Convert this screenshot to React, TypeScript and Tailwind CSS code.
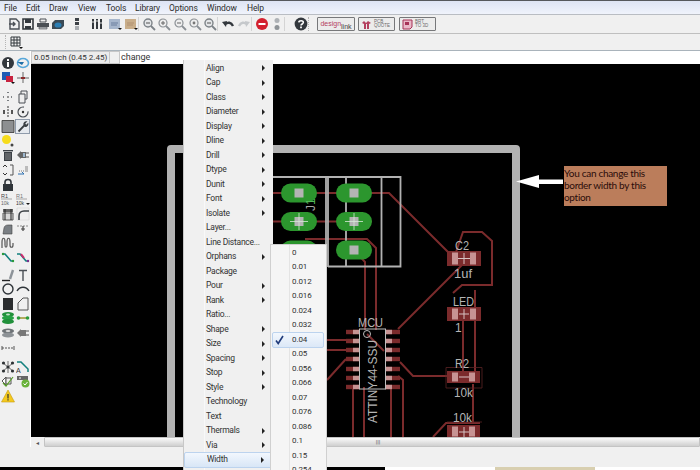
import React from "react";

const FONT = "font-['Roboto','Liberation_Sans',sans-serif]";

const menuBar = [
  { label: "File", w: "w-[22px]" },
  { label: "Edit", w: "w-[23px]" },
  { label: "Draw", w: "w-[29px]" },
  { label: "View", w: "w-[28px]" },
  { label: "Tools", w: "w-[29px]" },
  { label: "Library", w: "w-[34px]" },
  { label: "Options", w: "w-[38px]" },
  { label: "Window", w: "w-[40px]" },
  { label: "Help", w: "w-[30px]" },
];

const changeItems: [string, boolean][] = [
  ["Align", true], ["Cap", true], ["Class", true], ["Diameter", true], ["Display", true], ["Dline", true], ["Drill", true],
  ["Dtype", true], ["Dunit", true], ["Font", true], ["Isolate", true], ["Layer...", false], ["Line Distance...", false],
  ["Orphans", true], ["Package", false], ["Pour", true], ["Rank", true], ["Ratio...", false], ["Shape", true], ["Size", true],
  ["Spacing", true], ["Stop", true], ["Style", true], ["Technology", false], ["Text", false], ["Thermals", true], ["Via", true], ["Width", true],
];

const widths = ["0", "0.01", "0.012", "0.016", "0.024", "0.032", "0.04", "0.05", "0.056", "0.066", "0.07", "0.076", "0.086", "0.1", "0.15", "0.254"];

function Svg({ children, size = 14 }: { children: React.ReactNode; size?: number }) {
  return (
    <svg width={size} height={size} viewBox="0 0 14 14" className="block">
      {children}
    </svg>
  );
}

const G = "#4a4f55";

const icons: Record<string, React.ReactNode> = {
  newfile: <Svg><path d="M3 2h6l3 3v7H3z" fill="none" stroke={G} strokeWidth="1.4" /><path d="M2 7h6M6 5l2 2-2 2" fill="none" stroke={G} strokeWidth="1.4" /></Svg>,
  save: <Svg><path d="M2 2h10v10H2z" fill="none" stroke="#33383d" strokeWidth="1.6" /><path d="M4 2h6v4H4zM4 9h6v3H4z" fill="#33383d" /></Svg>,
  print: <Svg><path d="M4 2h6v3H4z" fill="none" stroke={G} /><path d="M1 6h12v4H1z" fill={G} /><path d="M3 10h8v2H3z" fill="#b5b8bb" stroke={G} strokeWidth=".6" /></Svg>,
  cam: <Svg><path d="M1 6l3-3h9v6l-3 3H1z" fill="#3b4a55" /><ellipse cx="7" cy="8" rx="3.5" ry="2.6" fill="#2c7fb5" /></Svg>,
  run: <Svg><path d="M5 1h4v3H5zM5 5h4v3H5z" fill="#3c4146" /><path d="M5 9h4v4H5z" fill="#a9adb1" /></Svg>,
  bars: <Svg><path d="M2 2h2v10H2zM6 2h2v10H6zM10 2h2v10h-2z" fill="#33383d" /><path d="M2 5h2M6 4h2M10 6h2" stroke="#ddd" /></Svg>,
  sch: <Svg><path d="M1 2h11v10H1z" fill="#a6b6cc" /><path d="M3 6h7M3 8h6" stroke="#6a7f9e" /><path d="M10 11h4l-2 2z" fill="#111" /></Svg>,
  brd: <Svg><path d="M1 2h11v10H1z" fill="#c9ae8a" /><path d="M3 6h7M3 8h6" stroke="#b09070" /><path d="M10 11h4l-2 2z" fill="#111" /></Svg>,
  zfit: <Svg><circle cx="6" cy="6" r="4" fill="#e4e6e8" stroke="#7c8287" strokeWidth="1.4" /><path d="M4 6h4" stroke="#555" /><path d="M9 9l4 4" stroke="#7c8287" strokeWidth="1.8" /></Svg>,
  zin: <Svg><circle cx="6" cy="6" r="4" fill="#eee" stroke="#8b9095" strokeWidth="1.2" /><path d="M4 6h4M6 4v4" stroke="#666" /><path d="M9 9l4 4" stroke="#8b9095" strokeWidth="1.8" /></Svg>,
  zout: <Svg><circle cx="6" cy="6" r="4" fill="#eee" stroke="#8b9095" strokeWidth="1.2" /><path d="M4 6h4" stroke="#666" /><path d="M9 9l4 4" stroke="#8b9095" strokeWidth="1.8" /></Svg>,
  zsel: <Svg><circle cx="6" cy="6" r="4" fill="#eee" stroke="#8b9095" strokeWidth="1.2" /><circle cx="6" cy="6" r="1.4" fill="#777" /><path d="M9 9l4 4" stroke="#8b9095" strokeWidth="1.8" /></Svg>,
  undo: <Svg><path d="M12 9C10 5 7 5 4 7" fill="none" stroke="#33383d" strokeWidth="2.4" /><path d="M1 5l5-1-1 6z" fill="#33383d" /></Svg>,
  redo: <Svg><path d="M2 9c2-4 5-4 8-2" fill="none" stroke="#c5c8cb" strokeWidth="2.4" /><path d="M13 5L8 4l1 6z" fill="#c5c8cb" /></Svg>,
  stop: <Svg><circle cx="7" cy="7" r="6" fill="#d3202f" /><path d="M3.5 6h7v2h-7z" fill="#fff" /></Svg>,
  go: <Svg><circle cx="7" cy="3.5" r="2.5" fill="#aeb2b6" /><circle cx="7" cy="10.5" r="2.5" fill="#8f9498" /></Svg>,
  help: <Svg><circle cx="7" cy="7" r="6.4" fill="#33383d" /><path d="M4.8 5.4C5 3.2 9.4 3.2 9.3 5.5 9.2 7 7 7 7 8.6" fill="none" stroke="#fff" strokeWidth="1.6" /><path d="M6.1 9.6h1.8v1.7H6.1z" fill="#fff" /></Svg>,
  grid: <Svg><path d="M2 2h9v9H2zM5 2v9M8 2v9M2 5h9M2 8h9" fill="none" stroke="#33383d" strokeWidth="1" /><path d="M10 12h4l-2 2z" fill="#111" /></Svg>,
  info: <Svg><circle cx="7" cy="7" r="6" fill="#33383d" /><path d="M6 3h2v2H6zM6 6h2v5H6z" fill="#fff" /></Svg>,
  back: <Svg><ellipse cx="7" cy="7" rx="5.5" ry="4.5" fill="none" stroke="#57a7d9" strokeWidth="1.6" /><path d="M1 6h7l-2 3z" fill="#1f6fa8" /></Svg>,
  layers: <Svg><path d="M1 1h8v8H1z" fill="#1d5bb5" /><path d="M5 5h7v6H5z" fill="#c8233f" /><path d="M10 11h4l-2 2z" fill="#111" /></Svg>,
  split: <Svg><path d="M7 1v11M1 7h5M8 7h5" stroke="#666" /><path d="M5 6h4v2H5z" fill="#8d2b2b" /></Svg>,
  move: <Svg><path d="M7 2v2M7 10v2M2 7h2M10 7h2" stroke="#5c6166" strokeWidth="1.6" strokeDasharray="1 1" /><circle cx="7" cy="7" r="1" fill="#777" /></Svg>,
  copy: <Svg><path d="M5 1h6v8H5z" fill="#eee" stroke={G} /><path d="M3 4h6v9H3z" fill="#eee" stroke={G} /></Svg>,
  mirror: <Svg><path d="M7 1v12" stroke="#333" strokeDasharray="2 1" /><path d="M2 5h2v4H2zM10 5h2v4h-2z" fill="#555" /></Svg>,
  rotate: <Svg><circle cx="7" cy="7" r="5" fill="none" stroke={G} strokeWidth="1.2" strokeDasharray="24 6" /><circle cx="7" cy="7" r="1.2" fill="#333" /></Svg>,
  square: <Svg size={15}><path d="M1 1h12v12H1z" fill="#8d8f91" stroke="#333" strokeWidth=".8" /></Svg>,
  wrench: <Svg><path d="M2 12l6-6c-.8-2.6 1.6-5 4.4-4L10 4.4l1 1.2 2.2-2.2c.8 3-1.6 5.2-4.2 4.4l-5.6 5.8z" fill="#3a3f44" /></Svg>,
  sun: <Svg><circle cx="5.5" cy="5.5" r="4.5" fill="#f6dc1c" /><circle cx="11" cy="11" r="1.5" fill="#444" /></Svg>,
  trash: <Svg><path d="M3 4h8v9H3z" fill="#3c4146" /><path d="M2 2h10v1.4H2z" fill="#3c4146" /><path d="M5 5v7M7 5v7M9 5v7" stroke="#aaa" strokeWidth=".7" /></Svg>,
  addpart: <Svg><path d="M1 7l4-4v8zM5 4h5v6H5z" fill="#666" /><path d="M10 5h3M10 9h3" stroke="#555" /><path d="M7 5h2v4H7z" fill="#9db7cf" /></Svg>,
  value: <Svg><path d="M2 4l2-2 2 2M2 10l2 2 2-2" fill="none" stroke="#333" /><path d="M9 2h3v10H9" fill="none" stroke="#555" /></Svg>,
  pinswap: <Svg><path d="M3 8h5" stroke="#777" strokeDasharray="1 1" /><path d="M9 3h3v6H9z" fill="#bbb" /><path d="M2 11h6l-2-2" fill="none" stroke="#2b6fb0" /></Svg>,
  lock: <Svg><path d="M4 6V4c0-3.4 6-3.4 6 0v2" fill="none" stroke="#2f3439" strokeWidth="1.6" /><path d="M2 6h10v7H2z" fill="#2f3439" /></Svg>,
  name: <Svg><text x="0" y="5.5" fontSize="5.5" fill="#444" fontFamily="Liberation Sans">R1</text><path d="M0 7h11" stroke="#777" strokeWidth=".6" /><text x="0" y="12.5" fontSize="5" fill="#666" fontFamily="Liberation Sans">10k</text></Svg>,
  val: <Svg><text x="0" y="5.5" fontSize="5.5" fill="#777" fontFamily="Liberation Sans">R1</text><path d="M0 7h11" stroke="#777" strokeWidth=".6" /><text x="0" y="12.5" fontSize="5" fill="#333" fontFamily="Liberation Sans">10k</text><path d="M10 11h4l-2 2z" fill="#111" /></Svg>,
  smash: <Svg><path d="M2 2h10v3H2z" fill="#666" /><path d="M2 6h10v7H2z" fill="#d8d8d8" stroke="#555" /><path d="M4 2v11M10 2v11" stroke="#222" /></Svg>,
  miter: <Svg><path d="M1 1h12v12H1z" fill="#efefef" stroke="#ccc" strokeWidth=".5" /><path d="M3 13V9c0-3 2-5 5-5h5" fill="none" stroke="#3c4146" strokeWidth="1.6" /></Svg>,
  splitline: <Svg><path d="M2 13l1-6c.3-2 2-3 4-3h4v9z" fill="#7a7f84" stroke="#444" strokeWidth=".6" /></Svg>,
  plus: <Svg><path d="M1 5h12" stroke="#888" strokeDasharray="2 1" /><path d="M7 5v5M5 8h4" stroke="#444" strokeWidth="1.2" /></Svg>,
  wave: <Svg><path d="M1 12V6c0-5 3-5 3 0v3c0 3 2 3 2 0V6c0-5 3-5 3 0v3c0 3 3 3 3 0V7" fill="none" stroke="#555" strokeWidth="1.2" /></Svg>,
  route: <Svg><path d="M1 3h3l6 7h3" fill="none" stroke="#13807e" strokeWidth="1.6" /><circle cx="2" cy="3" r="1.2" fill="#2c9b3a" /><circle cx="12" cy="10" r="1.2" fill="#2c9b3a" /></Svg>,
  ripup: <Svg><path d="M1 3h3l6 7h3" fill="none" stroke="#13807e" strokeWidth="1.6" /><path d="M5 3l3 4" stroke="#cf2b6e" strokeWidth="2" /><circle cx="12" cy="10" r="1.2" fill="#7a2e8f" /></Svg>,
  wire: <Svg><path d="M9 11l3-9" stroke="#8d9399" strokeWidth="2.4" /><path d="M1 12.5h8" stroke="#222" strokeWidth="1.4" /></Svg>,
  text: <Svg><path d="M3 2.5h8M7 2.5V13" stroke="#4a4f55" strokeWidth="1.4" fill="none" /></Svg>,
  circle: <Svg><circle cx="7" cy="7" r="5" fill="none" stroke="#2f3439" strokeWidth="1.4" /></Svg>,
  arc: <Svg><path d="M1 9c3-5 9-5 12 0" fill="none" stroke="#2f3439" strokeWidth="1.4" /></Svg>,
  rect: <Svg><path d="M2 1h10v12H2z" fill="#2a2c2e" /></Svg>,
  poly: <Svg><path d="M2 13V6l5-5h5v12z" fill="none" stroke="#555" /></Svg>,
  via: <Svg><ellipse cx="7" cy="3.5" rx="6" ry="2.4" fill="#21903b" /><ellipse cx="7" cy="7" rx="6" ry="2.4" fill="#25a043" /><ellipse cx="7" cy="10.5" rx="6" ry="2.4" fill="#21903b" /><ellipse cx="7" cy="3.5" rx="2" ry="1" fill="#bfe3c5" /></Svg>,
  signal: <Svg><path d="M1 7h12" stroke="#9a8f20" strokeWidth="1.4" /><circle cx="2.5" cy="7" r="1.8" fill="#2a9b3d" /><circle cx="11.5" cy="7" r="1.8" fill="#2a9b3d" /></Svg>,
  hole: <Svg><ellipse cx="7" cy="5" rx="6" ry="2.6" fill="#6d7276" /><ellipse cx="7" cy="9" rx="6" ry="2.6" fill="#8d9296" /><ellipse cx="7" cy="5" rx="2.4" ry="1" fill="#ddd" /></Svg>,
  attr: <Svg><path d="M1 7l4-4v8zM5 4h5v6H5z" fill="#777" /><path d="M10 5h3M10 9h3" stroke="#555" /></Svg>,
  dim: <Svg><path d="M1 5v4M13 5v4" stroke="#555" /><path d="M1 7h12" stroke="#555" strokeDasharray="2 1" /></Svg>,
  ratsnest: <Svg><path d="M2 3l10 8M2 11l10-8M7 1v12" stroke="#333" strokeWidth=".7" /><circle cx="2.5" cy="3" r="1.6" fill="#2d3134" /><circle cx="11.5" cy="3" r="1.6" fill="#2d3134" /><circle cx="2.5" cy="11" r="1.6" fill="#2d3134" /><circle cx="11.5" cy="11" r="1.6" fill="#2d3134" /><circle cx="7" cy="7" r="1.6" fill="#2d3134" /></Svg>,
  auto: <Svg><path d="M1 2h4l7 7v3" fill="none" stroke="#13807e" strokeWidth="1.5" /><text x="0" y="13" fontSize="7" fill="#333" fontFamily="Liberation Sans">A</text></Svg>,
  erc: <Svg><path d="M1 7l4-4v8z" fill="#fff" stroke="#555" /><path d="M5 4h5v6H5z" fill="#eee" stroke="#555" /><path d="M2 9l3 3 7-9" fill="none" stroke="#5aa02c" strokeWidth="1.2" /></Svg>,
  drc: <Svg><path d="M1 2h11v4H1z" fill="#666" /><path d="M3 3.5h2v1H3z" fill="#fff" /><circle cx="9.5" cy="9.5" r="4" fill="#69b23a" /><path d="M7.5 9.5l1.5 1.5 2.5-3" fill="none" stroke="#fff" /></Svg>,
  warn: <Svg><path d="M7 1l6.5 12h-13z" fill="#f4c91d" stroke="#c79a10" strokeWidth=".6" /><path d="M6.4 5h1.2v4.4H6.4zM6.4 10.2h1.2v1.2H6.4z" fill="#333" /></Svg>,
};

const sideRows: { a?: string; b?: string; gap?: string; active?: boolean }[] = [
  { a: "info", b: "back" },
  { a: "layers", b: "split" },
  { a: "move", b: "copy", gap: "mt-[4.5px]" },
  { a: "mirror", b: "rotate" },
  { a: "square", b: "wrench", active: true },
  { a: "sun" },
  { a: "trash", b: "addpart" },
  { a: "value", b: "pinswap" },
  { a: "lock" },
  { a: "name", b: "val" },
  { a: "smash", b: "miter" },
  { a: "splitline", b: "plus" },
  { a: "wave" },
  { a: "route", b: "ripup" },
  { a: "wire", b: "text", gap: "mt-[2.5px]" },
  { a: "circle", b: "arc" },
  { a: "rect", b: "poly" },
  { a: "via", b: "signal" },
  { a: "hole", b: "attr" },
  { a: "dim" },
  { a: "ratsnest", b: "auto", gap: "mt-[4.5px]" },
  { a: "erc", b: "drc" },
  { a: "warn" },
];

function Tool({ name, className = "" }: { name: string; className?: string }) {
  return <div className={`w-[15px] h-[15px] flex items-center justify-center shrink-0 ${className}`}>{icons[name]}</div>;
}

function Grip() {
  return <div className="w-px h-[14px] border-l border-dotted border-[#b5b5b5] shrink-0" />;
}

function Sep() {
  return <div className="w-px h-[14px] bg-[#d4d4d4] shrink-0" />;
}

function PinkButton({ caption, icon, className = "" }: { caption: string[]; icon?: React.ReactNode; className?: string }) {
  return (
    <div className={`h-[14px] w-[37px] shrink-0 flex items-center gap-[2px] px-[2px] border border-[#77787a] rounded-[1px] bg-[#ececec] ${className}`}>
      {icon}
      <div className="text-[4.5px] leading-[4.5px] text-[#6a6a6a] whitespace-nowrap font-['Liberation_Sans',sans-serif]">
        {caption.map((c) => <div key={c}>{c}</div>)}
      </div>
    </div>
  );
}

function TriangleRight() {
  return <div className="w-0 h-0 border-y-[3px] border-y-transparent border-l-[3.5px] border-l-[#222] shrink-0" />;
}

function Pcb() {
  const trace = "#7b2b2c";
  const gray = "#b2b2b2";
  const pad = (cx: number, cy: number) => (
    <g key={`${cx}-${cy}`}>
      <rect x={cx - 18} y={cy - 9.5} width={36} height={19} rx={9.5} fill="#2c962e" />
      <rect x={cx - 4.5} y={cy - 4.5} width={9} height={9} fill="#b4b4b4" />
    </g>
  );
  const smd = (x: number, y: number, w: number, h: number, sign: string) => (
    <g key={`${x}-${y}`}>
      <rect x={x} y={y} width={w} height={h} fill={trace} />
      <rect x={x + 5} y={y + 1.5} width={6} height={h - 3} fill="#c79393" />
      <rect x={x + w - 11} y={y + 1.5} width={6} height={h - 3} fill="#c79393" />
      <path d={sign} stroke="#d6c2c2" strokeWidth="1" fill="none" />
    </g>
  );
  const leftPins = [332, 341, 350, 359, 369, 378, 387];
  return (
    <svg viewBox="31 64 669 373" className="absolute inset-0 w-full h-full">
      <path d="M171 440V149H516V440" fill="none" stroke={gray} strokeWidth="8" strokeLinejoin="round" />
      <g fill="none" stroke={trace} strokeWidth="2">
        <path d="M270 193H389L448 252" />
        <path d="M270 221.5H372" />
        <path d="M305 239H367L376 248V330" />
        <path d="M354 250L365 262V330" />
        <path d="M456 252L463 232H482L492 241V285H462L453 293" />
        <path d="M465 262L398 329" />
        <path d="M463 321V371M475 290V371M473 384V422" />
        <path d="M400 362L413 376H447" />
        <path d="M433 437L446 423H480" />
        <path d="M327 340H346M327 350H346M327 380L346 359" />
        <path d="M353 387V437M364 387V437M391 387V437M403 437V380L398 376" />
        <path d="M367 334L384 351" />
      </g>
      <path d="M273 177H400.5V266.5H328M326 177V267M328 177V267M346 177V267M381.5 177V267" fill="none" stroke={gray} strokeWidth="1.8" />
      {[299, 354].flatMap((x) => [193, 221.5, 250].map((y) => pad(x, y)))}
      <path d="M299 213V230M290 221.5H308M354 213V230M345 221.5H363" stroke="#d8e8d8" strokeWidth=".8" />
      <text transform="translate(315 211) rotate(-90)" fontFamily="Liberation Sans" fontSize="12" fill="#a8a8a8">
        J<tspan fill="#55b85a">1</tspan>
      </text>
      {smd(447, 251, 34, 15, "M464 253V264M458 258.5H470")}
      {smd(447, 307, 34, 14, "M464 309V319M459 314H469")}
      {smd(447, 371, 33, 12, "M459 377H469")}
      {smd(447, 425, 33, 13, "M464 427V437M459 432H469")}
      <path d="M446 367.5H482V388H446ZM447 422H482" fill="none" stroke="#5a2325" strokeWidth=".8" />
      {leftPins.map((y) => (
        <g key={y}>
          <rect x={346} y={y - 2.2} width={14} height={4.4} fill={trace} />
          <rect x={353} y={y - 2.2} width={7} height={4.4} fill="#c79393" />
          <rect x={385} y={y - 2.2} width={15} height={4.4} fill={trace} />
          <rect x={385} y={y - 2.2} width={7} height={4.4} fill="#c79393" />
        </g>
      ))}
      <rect x={359.5} y={329} width={26} height={60} fill="none" stroke="#bdbdbd" strokeWidth="1" />
      <circle cx={367} cy={334} r={3.5} fill="none" stroke="#bdbdbd" strokeWidth="1" />
      <g fill="#b5b5b5" fontFamily="Liberation Sans" fontSize="12" lengthAdjust="spacingAndGlyphs">
        <text x={358} y={326.5} textLength={25} lengthAdjust="spacingAndGlyphs">MCU</text>
        <text x={455} y={250} textLength={14} lengthAdjust="spacingAndGlyphs">C2</text>
        <text x={454} y={277.5} textLength={18} lengthAdjust="spacingAndGlyphs">1uf</text>
        <text x={453} y={305.5} textLength={21} lengthAdjust="spacingAndGlyphs">LED</text>
        <text x={455} y={331.5}>1</text>
        <text x={455} y={368} textLength={14} lengthAdjust="spacingAndGlyphs">R2</text>
        <text x={454} y={396.5} textLength={19} lengthAdjust="spacingAndGlyphs">10k</text>
        <text x={453} y={422} textLength={19} lengthAdjust="spacingAndGlyphs">10k</text>
        <text transform="translate(376.5 423) rotate(-90)" textLength={83} lengthAdjust="spacingAndGlyphs">ATTINY44-SSU</text>
      </g>
      <path d="M516 181.5L539 175V179.5H563V184H539V188Z" fill="#fff" />
    </svg>
  );
}

export default function App() {
  return (
    <div className={`relative w-[700px] h-[470px] overflow-hidden flex flex-col bg-[#f0f0f0] ${FONT}`}>
      <div className="h-px bg-[#55585c]" />

      <div className="h-[14px] flex items-center pl-[4px] pt-[2px] bg-gradient-to-b from-[#dde4f4] to-[#f0f3fb] border-b border-[#b9bdc3] text-[8.5px] tracking-[-0.1px] text-[#2c2c2c]">
        {menuBar.map((m) => (
          <span key={m.label} className={m.w}>{m.label}</span>
        ))}
      </div>

      <div className="h-[19px] flex items-center pl-[6px] border-b border-[#bfbfbf] bg-[#f0f0f0]">
        <Tool name="newfile" />
        <Tool name="save" className="-ml-px" />
        <Tool name="print" />
        <Tool name="cam" />
        <Tool name="run" className="ml-[4px]" />
        <Tool name="bars" className="ml-[5px]" />
        <Tool name="sch" className="ml-[3px]" />
        <Tool name="brd" className="ml-px" />
        <Sep />
        <Tool name="zfit" className="ml-[2px]" />
        <Tool name="zin" />
        <Tool name="zout" className="ml-px" />
        <Tool name="zsel" />
        <Tool name="zfit" />
        <Sep />
        <Tool name="undo" className="ml-[2px]" />
        <Tool name="redo" className="ml-px" />
        <Sep />
        <Tool name="stop" className="ml-[2px]" />
        <Tool name="go" />
        <Sep />
        <Tool name="help" className="ml-[8px]" />
        <Grip />
        <div className="ml-[8px] h-[14px] w-[38px] shrink-0 flex items-center justify-center border border-[#77787a] rounded-[1px] bg-[#ececec] text-[7px] leading-[6px] text-[#b4405f] font-['Liberation_Sans',sans-serif]">
          <span>design</span>
          <span className="self-end text-[#444]">link</span>
        </div>
        <PinkButton
          className="ml-[3px]"
          caption={["PCB", "QUOTE"]}
          icon={<svg width="11" height="11" viewBox="0 0 11 11"><path d="M1 4l2-2 2 2 2-2 3 2-2 1v5H6V5H5v5H3V5z" fill="#b4405f" /></svg>}
        />
        <PinkButton
          className="ml-[4px]"
          caption={["BRT", "TO 3D"]}
          icon={<svg width="11" height="11" viewBox="0 0 11 11"><path d="M1 1h9v7L8 10H1z" fill="#e9b8c8" stroke="#a63357" /><path d="M3 3h4v3H3z" fill="#a63357" /></svg>}
        />
      </div>

      <div className="h-[17px] flex items-center pl-[5px] gap-[1px] border-b border-[#a9b3bb] bg-[#f0f0f0]">
        <Grip />
        <Tool name="grid" className="ml-[1px]" />
      </div>

      <div className="flex-1 min-h-0 flex">
        <div className="w-[31px] shrink-0 pt-[5px] pl-px border-r border-white">
          {sideRows.map((r, i) => (
            <div key={i} className={`h-[14.6px] flex items-center ${r.gap ?? ""}`}>
              <div className="w-[14px] flex justify-center">{r.a && icons[r.a]}</div>
              <div className={`w-[15px] h-[15px] flex justify-center items-center ${r.active ? "border border-[#8f9bab] bg-[#e5e9ee]" : ""}`}>
                {r.b && icons[r.b]}
              </div>
            </div>
          ))}
        </div>

        <div className="flex-1 min-w-0 flex flex-col bg-white">
          <div className="h-[13px] flex items-center text-[8px] text-[#333] bg-white whitespace-nowrap">
            <div className="w-[79px] h-full flex items-center pl-[2px] bg-[#ececec] border border-[#c8c8c8]">0.05 inch (0.45 2.45)</div>
            <div className="w-[10px] h-full bg-[#f0f0f0] border border-[#c8c8c8] border-l-0" />
            <div className="pl-[1px] text-[9px]">change</div>
          </div>
          <div className="relative flex-1 min-h-0 bg-black">
            <Pcb />
            <div className="absolute left-[533px] top-[102px] w-[103px] h-[40px] bg-[#bb7d5b] text-[10px] leading-[12px] pt-[1px] tracking-[-0.3px] text-[#2a0c0a] font-['Lato',sans-serif]">
              You can change this border width by this option
            </div>
          </div>
          <div className="h-[10px] flex items-center bg-[#f0f0f0]">
            <div className="w-[13px] flex justify-center text-[6px] text-[#555]">◂</div>
            <div className="flex-1 h-full flex items-center justify-center rounded-[1px] border border-[#c4c4c4] bg-gradient-to-b from-[#fafafa] to-[#cfcfcf] text-[6px] leading-none text-[#555]">
              <span className="ml-[12px]">|||</span>
            </div>
          </div>
        </div>
      </div>

      <div className="h-[19.5px] shrink-0 bg-[#f0f0f0]" />
      <div className="h-[3.5px] shrink-0 flex">
        <div className="w-[385px] bg-black" />
        <div className="w-[110px] bg-white" />
        <div className="w-[100px] bg-[#d8cfb0]" />
        <div className="flex-1 bg-white" />
      </div>

      {/* Change menu + Width submenu */}
      <div className="absolute left-[183px] top-[60px] w-[90px] h-[410px] bg-[#f0f0f0] border-l border-[#c8c8c8] text-[8.5px] tracking-[-0.25px] text-[#333] pt-[1px] whitespace-nowrap">
        <div className="absolute left-[20px] top-0 bottom-0 w-px bg-[#f8f8f8]" />
        {changeItems.map(([label, sub]) => {
          const active = label === "Width";
          return (
            <div
              key={label}
              className={`relative flex items-center justify-between pl-[22px] pr-[8px] ${
                active
                  ? "h-[16px] -my-[0.75px] rounded-[2px] border border-[#bcd3ee] bg-gradient-to-b from-[#f2f7fd] to-[#d8e6f6]"
                  : "h-[14.5px]"
              }`}
            >
              <span>{label}</span>
              {sub && <TriangleRight />}
            </div>
          );
        })}
      </div>
      <div className="absolute left-[270px] top-[244px] w-[57px] h-[226px] bg-[#f5f5f5] border-l border-r border-t border-[#d0d0d0] text-[8px] tracking-[-0.1px] text-[#333]">
        <div className="absolute left-[18px] top-0 bottom-0 w-px bg-[#e4e4e4]" />
        <div className="pt-[0.5px]">
          {widths.map((w) => {
            const on = w === "0.04";
            return (
              <div key={w} className="relative h-[14.5px] flex items-center pl-[21px]">
                {on && (
                  <div className="absolute left-[1px] right-[2px] -top-[0.5px] h-[15.5px] rounded-[2px] border border-[#bcd3ee] bg-gradient-to-b from-[#f2f7fd] to-[#dce8f7]" />
                )}
                {on && (
                  <svg width="9" height="10" viewBox="0 0 9 10" className="absolute left-[4px] top-[2px]">
                    <path d="M1 5.5L3.2 8.5 8 1" fill="none" stroke="#1f3a7a" strokeWidth="1.6" />
                  </svg>
                )}
                <span className="relative">{w}</span>
              </div>
            );
          })}
        </div>
      </div>
    </div>
  );
}
